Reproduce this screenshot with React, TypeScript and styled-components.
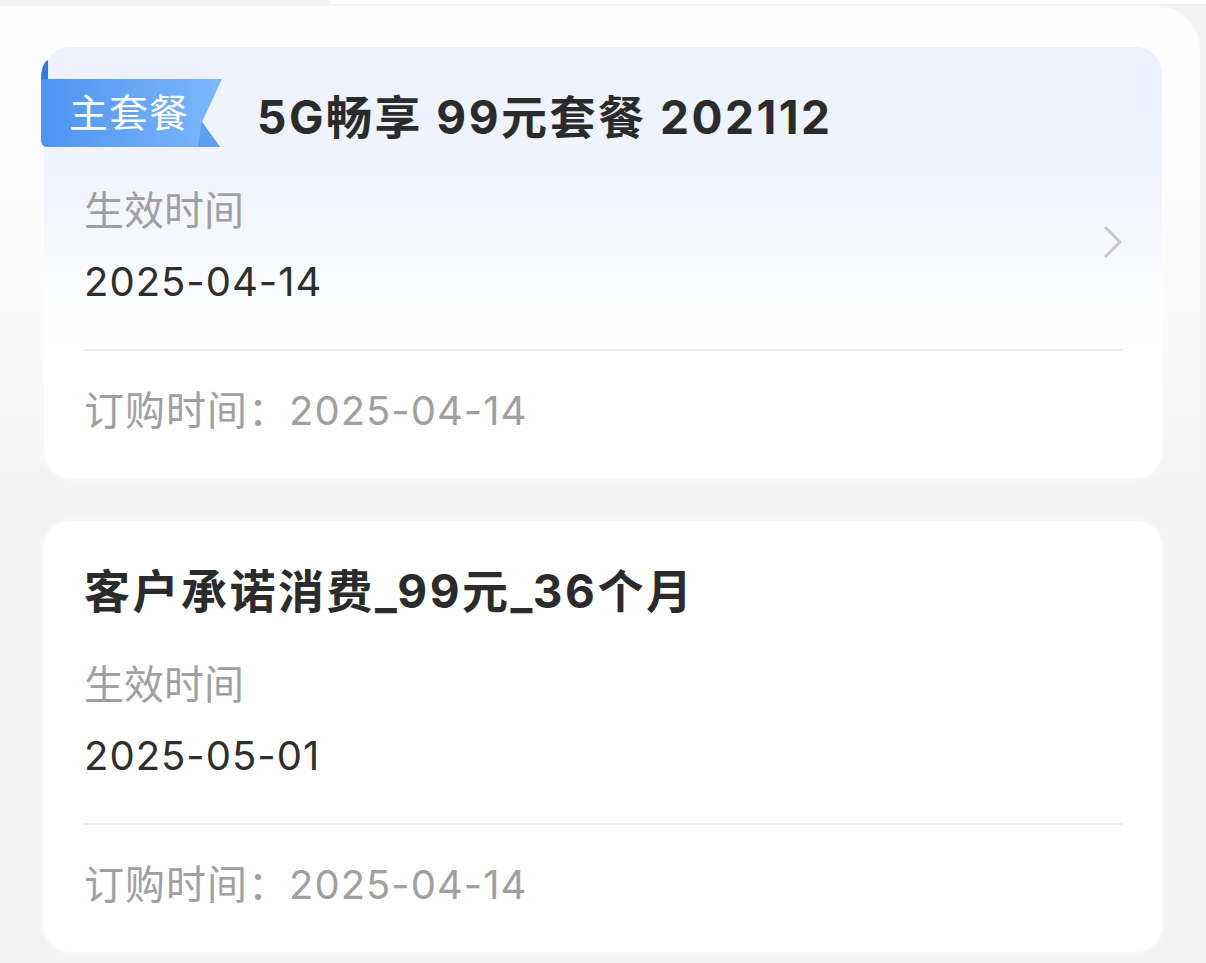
import * as React from 'react';
import styled, { createGlobalStyle } from 'styled-components';

const GlobalStyle = createGlobalStyle`
  html, body {
    margin: 0;
    padding: 0;
    background: #f4f4f4;
    font-family: Inter, "Noto Sans CJK SC", sans-serif;
  }
`;

const Page = styled.div`
  width: 1206px;
  height: 963px;
  overflow: hidden;
  background: #f4f4f4;
`;

const TopSheet = styled.div`
  height: 4px;
  margin-left: 330px;
  background: #fff;
  border-bottom-left-radius: 12px;
  box-shadow: 0 2px 3px rgba(0, 0, 0, 0.03);
`;

const Panel = styled.div`
  margin: 2px 6px 0 0;
  padding: 41px 44px 0 44px;
  border-top-right-radius: 44px;
  background: linear-gradient(180deg, #fdfdfd 0%, #f9f9f9 300px, #f4f4f4 480px);
  display: flex;
  flex-direction: column;
  gap: 43px;
`;

const Card = styled.div<{ $tinted?: boolean }>`
  width: 1118px;
  box-sizing: border-box;
  padding: 42px 40px 43px;
  border-radius: 26px;
  background: ${p => p.$tinted
    ? 'linear-gradient(180deg, #ecf1fd 0%, #f2f5fd 35%, #fbfcff 58%, #ffffff 70%)'
    : '#ffffff'};
  box-shadow: 0 0 6px rgba(255, 255, 255, 0.9);
`;

const TitleRow = styled.div`
  display: flex;
  align-items: center;
  height: 56px;
`;

const Badge = styled.div`
  position: relative;
  width: 182px;
  height: 68px;
  margin: 0 35px 8px -44px;
  flex-shrink: 0;
`;

const BadgeShape = styled.svg`
  position: absolute;
  left: 0;
  top: -19px;
  width: 182px;
  height: 87px;
`;

const BadgeText = styled.span`
  position: relative;
  display: block;
  padding-left: 29px;
  line-height: 68px;
  font-size: 39px;
  color: #ffffff;
  letter-spacing: 1px;
`;

const Title = styled.div`
  font-size: 46px;
  font-weight: 700;
  color: #2b2b2b;
  line-height: 56px;
  letter-spacing: 2.5px;
  white-space: pre;
`;

const InfoRow = styled.div`
  display: flex;
  align-items: center;
  justify-content: space-between;
  margin-top: 42px;
  padding-bottom: 43px;
  border-bottom: 2px solid #ececec;
`;

const InfoColumn = styled.div`
  display: flex;
  flex-direction: column;
  gap: 23px;
`;

const Label = styled.div`
  font-size: 40px;
  line-height: 48px;
  color: #a0a0a0;
`;

const Value = styled.div`
  font-size: 40px;
  line-height: 48px;
  letter-spacing: 1px;
  color: #2e2e2e;
`;

const Chevron = styled.svg`
  width: 22px;
  height: 36px;
  margin: 0 -2px 10px 0;
`;

const Footer = styled.div`
  margin-top: 36px;
  font-size: 40px;
  line-height: 48px;
  letter-spacing: 1px;
  color: #a0a0a0;
  white-space: pre;
`;

interface PlanCardProps {
  name: string;
  start: string;
  ordered: string;
  main?: boolean;
}

const PlanCard = ({ name, start, ordered, main }: PlanCardProps) => (
  <Card $tinted={main}>
    <TitleRow>
      {main && (
        <Badge>
          <BadgeShape viewBox="0 0 182 87">
            <defs>
              <linearGradient id="badgeFill" x1="0" y1="0" x2="1" y2="0">
                <stop offset="0" stopColor="#4d93f2" />
                <stop offset="1" stopColor="#7db8fb" />
              </linearGradient>
            </defs>
            <path d="M1 19 C1 8 4 2 8 0 L8 19 Z" fill="#2f7be8" />
            <path d="M1 19 H182 L162 62 L180 87 H7 C3 87 1 84 1 80 Z" fill="url(#badgeFill)" />
            <path d="M162 62 L180 87 H158 Z" fill="#5b9ef2" />
          </BadgeShape>
          <BadgeText>主套餐</BadgeText>
        </Badge>
      )}
      <Title>{name}</Title>
    </TitleRow>
    <InfoRow>
      <InfoColumn>
        <Label>生效时间</Label>
        <Value>{start}</Value>
      </InfoColumn>
      {main && (
        <Chevron viewBox="0 0 22 36">
          <path d="M3 3 L18 18 L3 33" fill="none" stroke="#c9c9c9" strokeWidth="3" />
        </Chevron>
      )}
    </InfoRow>
    <Footer>{`订购时间：${ordered}`}</Footer>
  </Card>
);

export default function App() {
  return (
    <Page>
      <GlobalStyle />
      <TopSheet />
      <Panel>
        <PlanCard main name="5G畅享 99元套餐 202112" start="2025-04-14" ordered="2025-04-14" />
        <PlanCard name="客户承诺消费_99元_36个月" start="2025-05-01" ordered="2025-04-14" />
      </Panel>
    </Page>
  );
}
